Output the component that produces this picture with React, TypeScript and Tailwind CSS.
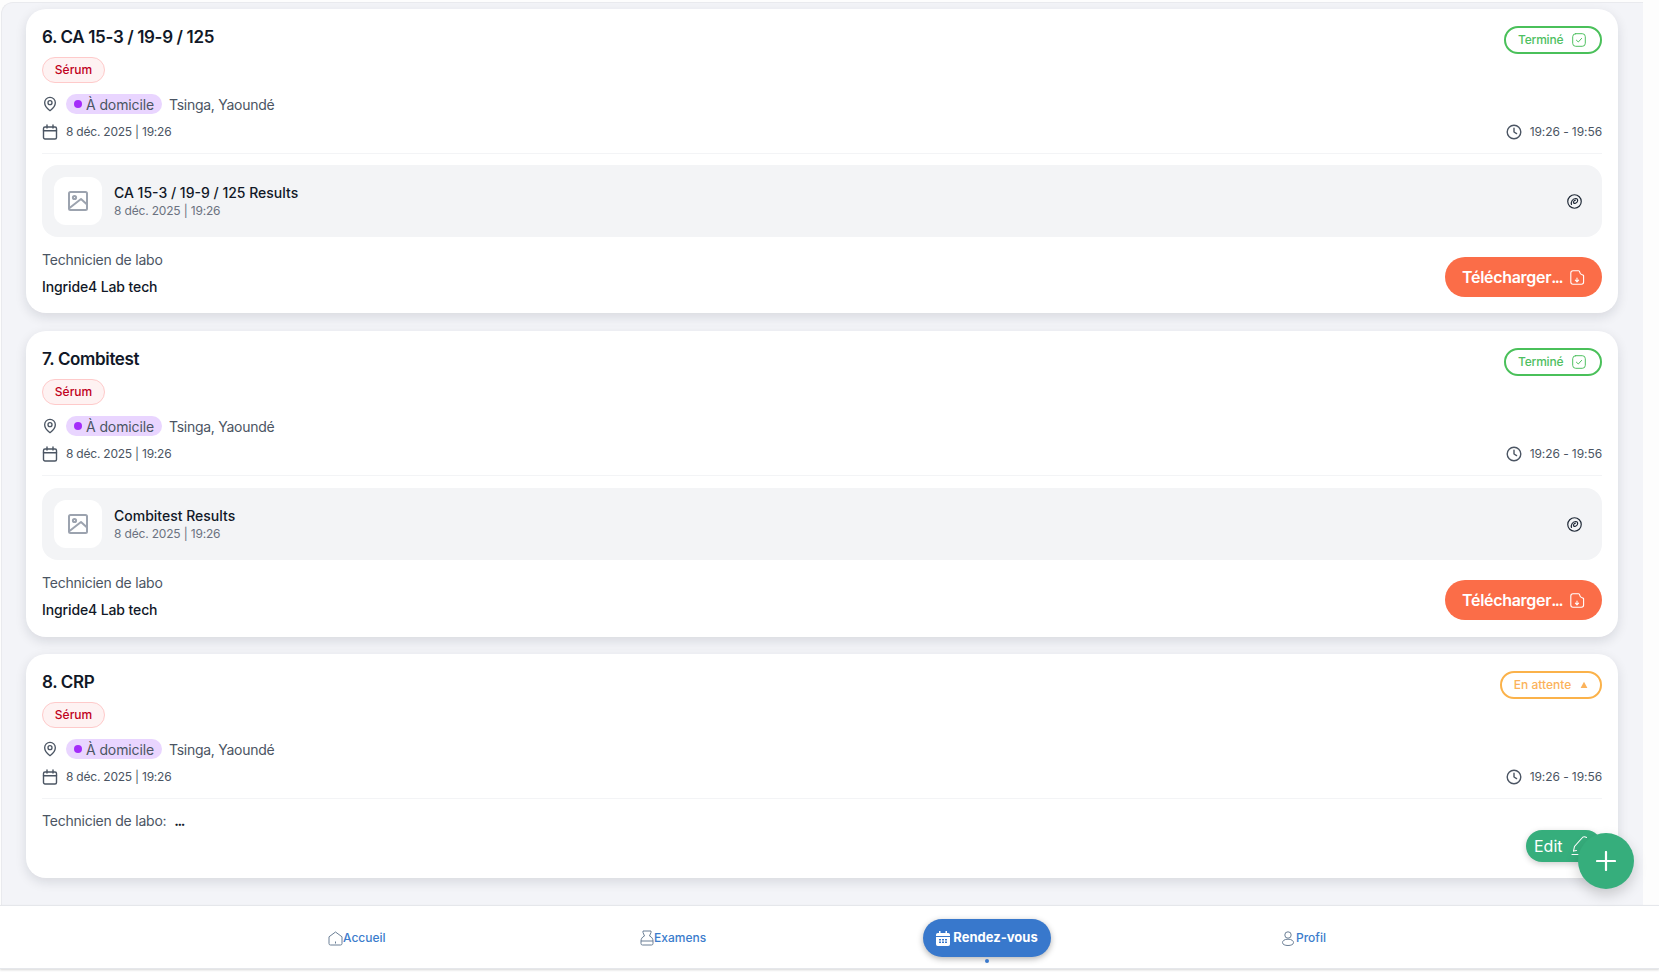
import React from "react";

const font = { fontFamily: '"Inter", "Noto Sans", sans-serif' };

function PinIcon() {
  return (
    <svg width="16" height="16" viewBox="0 0 24 24" fill="none" stroke="#4b5563" strokeWidth="2" strokeLinecap="round" strokeLinejoin="round">
      <path d="M20 10c0 6-8 12-8 12s-8-6-8-12a8 8 0 0 1 16 0Z" />
      <circle cx="12" cy="10" r="3" />
    </svg>
  );
}
function CalIcon() {
  return (
    <svg width="16" height="16" viewBox="0 0 16 16" fill="none" stroke="#4b5563" strokeWidth="1.4" strokeLinecap="round" strokeLinejoin="round">
      <rect x="1.5" y="3" width="13" height="12" rx="1.5" />
      <path d="M1.5 6.8h13M5 1v3M11 1v3" />
    </svg>
  );
}
function ClockIcon() {
  return (
    <svg width="16" height="16" viewBox="0 0 16 16" fill="none" stroke="#4b5563" strokeWidth="1.4" strokeLinecap="round" strokeLinejoin="round">
      <circle cx="8" cy="8" r="6.8" />
      <path d="M8 4.2V8l2.6 1.6" />
    </svg>
  );
}
function ImgIcon() {
  return (
    <svg width="20" height="20" viewBox="0 0 20 20" fill="none" stroke="#9ca3af" strokeWidth="2" strokeLinejoin="round" strokeLinecap="round">
      <rect x="1" y="1" width="18" height="18" rx="1.5" />
      <circle cx="6.5" cy="6.5" r="1.6" />
      <path d="M1.5 17 13 8l5.5 5" />
    </svg>
  );
}
function EyeRing() {
  return (
    <svg width="15" height="15" viewBox="0 0 14 14" fill="none" stroke="#1f2937" strokeWidth="1.1" strokeLinecap="round">
      <circle cx="7" cy="7" r="6.3" />
      <path d="M4.2 9.8C3.4 7.6 5 4.4 8 4.2c1.8-.1 2.4 1.6 1.6 3-.8 1.3-2.6 2-3.3 1.2-.7-.8.3-2.6 1.6-2.7" />
    </svg>
  );
}
function CheckBox() {
  return (
    <svg width="14" height="14" viewBox="0 0 14 14" fill="none" stroke="#4ec05f" strokeWidth="1" strokeLinecap="round" strokeLinejoin="round">
      <rect x="0.7" y="0.7" width="12.6" height="12.6" rx="3" />
      <path d="M4.4 7.2 6.3 9l3.3-3.6" />
    </svg>
  );
}
function FileDown() {
  return (
    <svg width="15" height="15" viewBox="0 0 15 15" fill="none" stroke="#ffffff" strokeWidth="1.1" strokeLinecap="round" strokeLinejoin="round">
      <path d="M3 .8h5.6c.3 0 .5.1.7.3l.4.9c.1 1.3 1 2.4 2.4 2.7l1.2.5c.2.2.3.4.3.7V12a2.2 2.2 0 0 1-2.2 2.2H3A2.2 2.2 0 0 1 .8 12V3A2.2 2.2 0 0 1 3 .8Z" />
      <path d="M7 8v3.5M5.4 10.2 7 11.8l1.6-1.6" />
    </svg>
  );
}
function Status({ done }: { done: boolean }) {
  if (done) {
    return (
      <div className="mt-px flex h-[28px] w-[98px] items-center gap-[9px] rounded-full border-2 border-[#4ac05a] pl-3 text-[12px] font-medium tracking-[-0.2px] text-[#4ec05f]">
        <span>Terminé</span>
        <CheckBox />
      </div>
    );
  }
  return (
    <div className="mt-px flex h-[28px] w-[102px] items-center justify-center gap-[9px] rounded-full border-2 border-[#fbb24a] text-[12px] font-medium text-[#fbb25a]">
      <span>En attente</span>
      <svg width="8" height="8" viewBox="0 0 8 8" fill="#fbb25a">
        <path d="M4 .8 7.4 7H.6Z" />
      </svg>
    </div>
  );
}
function Results({ title, taller }: { title: string; taller: boolean }) {
  return (
    <div className={taller ? "mt-3 flex h-[72px] items-center rounded-2xl bg-[#f3f4f6] pl-3 pr-3" : "mt-[11px] flex h-[72px] items-center rounded-2xl bg-[#f3f4f6] pl-3 pr-3"}>
      <div className="flex h-12 w-12 items-center justify-center rounded-xl bg-white">
        <ImgIcon />
      </div>
      <div className="ml-3 flex-1">
        <div className="text-[14px] font-medium leading-[18px] text-[#111827]">{title}</div>
        <div className="text-[12px] leading-[17px] tracking-[-0.17px] text-[#6b7280]">8 déc. 2025 | 19:26</div>
      </div>
      <div className="flex h-8 w-8 items-center justify-center">
        <EyeRing />
      </div>
    </div>
  );
}
function Card({ title, done, result, taller = false }: { title: string; done: boolean; result?: string; taller?: boolean }) {
  return (
    <div className={taller ? "relative -mb-px rounded-[20px] bg-white px-4 pt-4 shadow-[0_4px_12px_rgba(17,24,39,0.12)]" : "relative rounded-[20px] bg-white px-4 pt-4 shadow-[0_4px_12px_rgba(17,24,39,0.12)]"}>
      <div className="flex items-start justify-between">
        <div>
          <div className="mt-px text-[17px] font-semibold leading-[22px] tracking-[-0.36px] text-[#111827]">{title}</div>
          <div className="mt-[9px] flex h-[26px] w-[63px] items-center justify-center rounded-full border border-[#fecaca] bg-[#fef2f2] text-[12px] font-medium text-[#c00021]">
            Sérum
          </div>
        </div>
        <Status done={done} />
      </div>
      <div className="mt-[10px] flex h-[22px] items-center text-[14px] tracking-[-0.1px] text-[#4b5563]">
        <div className="flex w-[24px]">
          <PinIcon />
        </div>
        <div className="flex h-[20px] w-[96px] items-center gap-1 rounded-full bg-[#e9d5ff] pl-2">
          <span className="h-2 w-2 rounded-full bg-[#a42bfa]" />
          <span>À domicile</span>
        </div>
        <span className="ml-[7px] tracking-[-0.28px]">Tsinga, Yaoundé</span>
      </div>
      <div className="mt-[6px] flex h-[22px] items-center justify-between text-[12px] text-[#4b5563]">
        <div className="flex items-center">
          <div className="flex w-[24px]">
            <CalIcon />
          </div>
          <span className="tracking-[-0.22px]">8 déc. 2025 | 19:26</span>
        </div>
        <div className="flex items-center gap-[8px]">
          <ClockIcon />
          <span className="tracking-[-0.08px]">19:26 - 19:56</span>
        </div>
      </div>
      <div className="mt-[10px] h-px bg-[#f3f4f6]" />
      {result ? (
        <>
          <Results title={result} taller={taller} />
          <div className={taller ? "flex items-end justify-between pb-[17px] pt-[13px]" : "flex items-end justify-between pb-4 pt-[13px]"}>
            <div>
              <div className="text-[14px] leading-5 tracking-[-0.23px] text-[#4b5563]">Technicien de labo</div>
              <div className="mt-[7px] text-[14px] font-medium leading-5 tracking-[-0.12px] text-[#111827]">Ingride4 Lab tech</div>
            </div>
            <div className="flex h-10 w-[157px] items-center justify-center gap-2 rounded-full bg-[#fb6d48] text-[16px] font-semibold tracking-[-0.3px] text-white">
              <span>
                Télécharger<span className="tracking-[-1.5px]">...</span>
              </span>
              <FileDown />
            </div>
          </div>
        </>
      ) : (
        <div className="flex h-[79px] items-start justify-between pt-3">
          <div className="flex text-[14px] leading-5 tracking-[-0.23px] text-[#4b5563]">
            <span>Technicien de labo:</span>
            <span className="ml-2 font-bold tracking-[-1.5px] text-[#111827]">...</span>
          </div>
        </div>
      )}
    </div>
  );
}
function NavItem({ label, icon }: { label: string; icon: React.ReactNode }) {
  return (
    <div className="flex items-center text-[12px] font-medium text-[#3b7ccc]">
      {icon}
      <span>{label}</span>
    </div>
  );
}

export default function App() {
  return (
    <div style={font} className="relative h-[972px] w-[1659px] overflow-hidden bg-[#fdfdfd]">
      <div className="ml-px mt-[2px] h-[903px] w-[1642px] rounded-tl-xl border-l border-t border-[#e9eaee] bg-[#f3f4f8] pl-[24px] pr-[25px] pt-[6px]">
        <div className="flex flex-col gap-[18px]">
          <Card title="6. CA 15-3 / 19-9 / 125" done result="CA 15-3 / 19-9 / 125 Results" />
          <Card title="7. Combitest" done result="Combitest Results" taller />
          <Card title="8. CRP" done={false} />
        </div>
      </div>

      <div className="flex h-[64px] items-center border-y border-[#e5e7eb] bg-white pl-[328px] pt-[2px] shadow-[0_1px_2px_rgba(0,0,0,0.15)]">
        <div className="flex w-[298px]">
          <NavItem
            label="Accueil"
            icon={
              <svg width="15" height="15" viewBox="0 0 15 15" fill="none" stroke="#6b7f96" strokeWidth="1">
                <path d="M7.5 1 14 5.8V12.5a1.5 1.5 0 0 1-1.5 1.5h-10A1.5 1.5 0 0 1 1 12.5V5.8Z" />
                <path d="M7.5 10.5v2" />
              </svg>
            }
          />
        </div>
        <div className="flex w-[283px] pl-[14px]">
          <NavItem
            label="Examens"
            icon={
              <svg width="14" height="16" viewBox="0 0 14 16" fill="none" stroke="#6b7f96" strokeWidth="1">
                <path d="M3 1h8v1.5L9.5 6c2.5 1 3.5 3 3.5 5v2.5a1.5 1.5 0 0 1-1.5 1.5h-9A1.5 1.5 0 0 1 1 13.5V11c0-2 1-4 3.5-5L3 2.5Z" />
                <path d="M1 11h12" />
              </svg>
            }
          />
        </div>
        <div className="relative ml-[14px] flex h-[38px] w-[128px] items-center justify-center gap-[3px] rounded-full bg-[#3878cc] text-[13px] font-bold text-white shadow-[0_2px_6px_rgba(0,0,0,0.3)]">
          <svg width="14" height="15" viewBox="0 0 14 15" fill="#fff">
            <path d="M3 0h1.5v2h5V0H11v2h1.2A1.8 1.8 0 0 1 14 3.8V5H0V3.8A1.8 1.8 0 0 1 1.8 2H3Z" />
            <path fillRule="evenodd" d="M0 6h14v7.2a1.8 1.8 0 0 1-1.8 1.8H1.8A1.8 1.8 0 0 1 0 13.2ZM3 8v1.5h2V8Zm3 0v1.5h2V8Zm3 0v1.5h2V8Zm-6 2.5V12h2v-1.5Zm3 0V12h2v-1.5Zm3 0V12h2v-1.5Z" />
          </svg>
          <span>Rendez-vous</span>
          <span className="absolute -bottom-[6px] left-[62px] h-1 w-1 rounded-full bg-[#3878cc]" />
        </div>
        <div className="ml-[230px]">
          <NavItem
            label="Profil"
            icon={
              <svg className="mr-px" width="14" height="15" viewBox="0 0 14 15" fill="none" stroke="#6b7f96" strokeWidth="1">
                <circle cx="7" cy="4" r="3.2" />
                <path d="M7 8.2c3.5 0 5.5 1.5 5.5 3.4S10 14.5 7 14.5 1.5 13.5 1.5 11.6 3.5 8.2 7 8.2Z" />
              </svg>
            }
          />
        </div>
      </div>

      <div className="absolute left-[1526px] top-[830px] flex h-8 w-[76px] items-center rounded-full bg-[#36ae7c] pl-2 text-[16px] text-white shadow-[0_2px_6px_rgba(0,0,0,0.2)]">
        Edit
        <svg className="ml-[8px]" width="18" height="20" viewBox="0 0 18 20" fill="none" stroke="#fff" strokeWidth="1.1" strokeLinecap="round">
          <path d="M2.5 15 3.5 10.5 11 2c1-1.5 3-1.5 4.5-.5" />
          <path d="M2.5 15l3-.5" />
          <path d="M1 18.5h6" />
        </svg>
      </div>
      <div className="absolute left-[1578px] top-[833px] flex h-14 w-14 items-center justify-center rounded-full bg-[#36ae7c] shadow-[0_6px_14px_rgba(0,0,0,0.18)]">
        <svg width="20" height="20" viewBox="0 0 20 20" stroke="#fff" strokeWidth="2.2" strokeLinecap="round">
          <path d="M10 1v18M1 10h18" />
        </svg>
      </div>
    </div>
  );
}
